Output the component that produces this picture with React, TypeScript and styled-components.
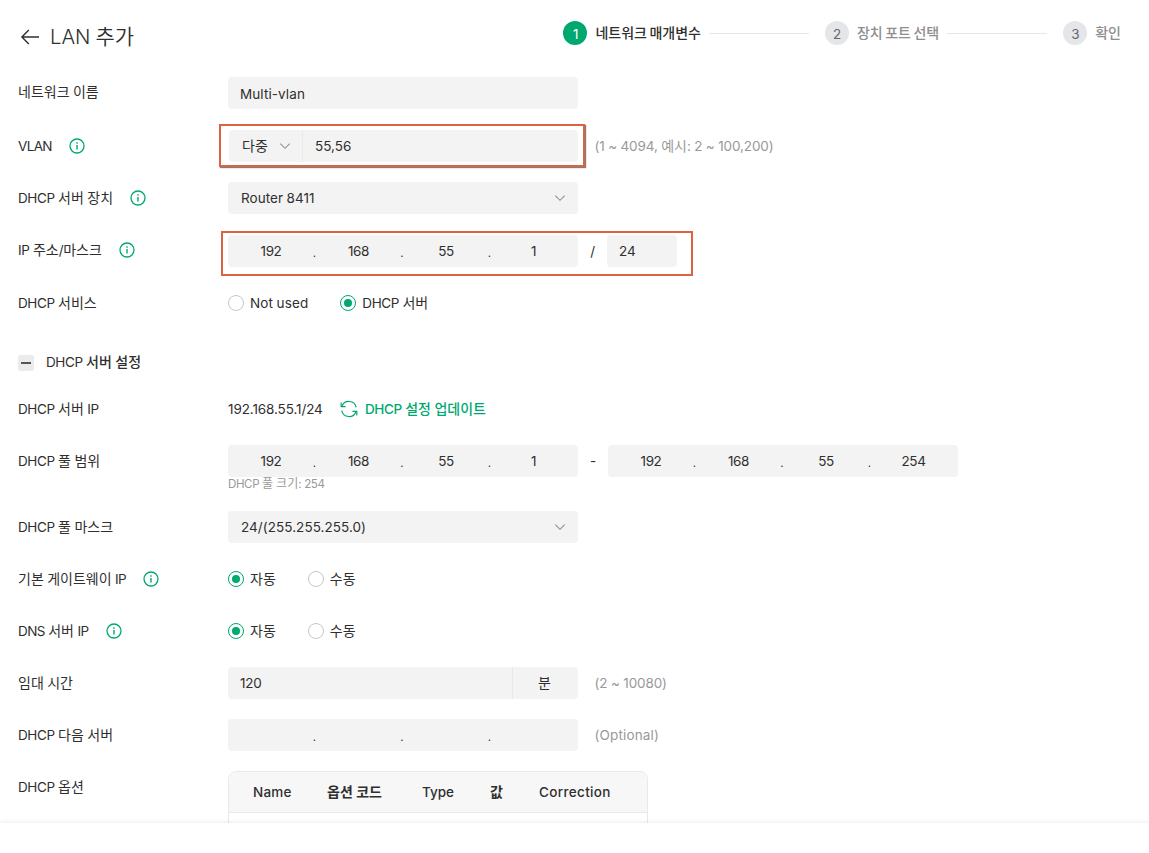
import React from 'react';
import styled, { createGlobalStyle, css } from 'styled-components';

const GREEN = '#00a870';
const INK = '#2f2f2f';
const FIELD = '#f3f3f3';
const MUTED = '#999999';

const GlobalStyle = createGlobalStyle`
  body {
    margin: 0;
    background: #fff;
    color: ${INK};
    font: 400 14px/20px Roboto, "Noto Sans CJK KR", sans-serif;
  }
  * { box-sizing: border-box; }
`;

const Page = styled.div`
  height: 853px;
  display: flex;
  flex-direction: column;
  overflow: hidden;
`;

const Content = styled.main`
  height: 823px;
  flex: none;
  overflow: hidden;
  padding: 0 18px;
`;

const Footer = styled.footer`
  position: relative;
  flex: 1;
  background: #fff;
  box-shadow: 0 -1px 4px rgba(0, 0, 0, 0.08);
`;

const Latin = styled.span<{ $spacing: number; $weight?: number }>`
  font-family: Inter, sans-serif;
  font-size: 0.964em;
  font-weight: ${(p) => p.$weight ?? 'inherit'};
  letter-spacing: ${(p) => p.$spacing}px;
`;

const TextRun = styled.span`
  white-space: nowrap;
`;

const Header = styled.header`
  height: 77px;
  display: flex;
  justify-content: space-between;
  align-items: flex-start;
`;

const Title = styled.h1`
  display: flex;
  align-items: center;
  gap: 10px;
  margin: 22px 0 0 2px;
  font-size: 21px;
  line-height: 30px;
  font-weight: 350;
`;

const Steps = styled.ol`
  display: flex;
  align-items: center;
  list-style: none;
  margin: 21px 10px 0 0;
  padding: 0;
  height: 24px;
`;

const Step = styled.li<{ $active?: boolean }>`
  display: flex;
  align-items: center;
  gap: 8px;
  color: ${(p) => (p.$active ? INK : '#8e8e8e')};
  font-weight: 500;
  word-spacing: -1px;
  white-space: nowrap;
`;

const StepNumber = styled.span<{ $active?: boolean }>`
  width: 24px;
  height: 24px;
  border-radius: 50%;
  display: grid;
  place-items: center;
  padding-top: 1px;
  font-weight: 400;
  background: ${(p) => (p.$active ? GREEN : '#e5e6ea')};
  color: ${(p) => (p.$active ? '#fff' : '#666')};
`;

const StepLine = styled.li`
  width: 100px;
  height: 1px;
  margin: 1px 16px 0 8px;
  background: #e8e8e8;
`;

const Row = styled.div<{ $gap?: number }>`
  display: flex;
  align-items: center;
  height: 32px;
  margin-bottom: ${(p) => p.$gap ?? 20}px;
`;

const Label = styled.div<{ $raised?: boolean }>`
  width: 210px;
  flex: none;
  display: flex;
  align-items: center;
  gap: 17px;
  padding-bottom: ${(p) => (p.$raised ? 2 : 0)}px;
  white-space: nowrap;
`;

const fieldBox = css`
  height: 32px;
  border-radius: 4px;
  background: ${FIELD};
`;

const Field = styled.div<{ $width?: number; $lowered?: boolean }>`
  ${fieldBox}
  width: ${(p) => p.$width ?? 350}px;
  display: flex;
  align-items: center;
  padding: ${(p) => (p.$lowered ? 2 : 0)}px 12px 0;
`;

const SelectField = styled(Field)`
  justify-content: space-between;
  padding: 0 12px 0 13px;
`;

const SplitField = styled.div<{ $inset?: boolean }>`
  ${fieldBox}
  position: relative;
  display: flex;
  width: ${(p) => (p.$inset ? 349 : 350)}px;
  margin-left: ${(p) => (p.$inset ? 1 : 0)}px;
`;

const ModePart = styled.div`
  width: 74px;
  display: flex;
  align-items: center;
  justify-content: space-between;
  padding: 0 11px 0 13px;
  border-right: 1px solid #eaeaea;
`;

const ValuePart = styled.div`
  flex: 1;
  display: flex;
  align-items: center;
  padding-left: 12px;
`;

const UnitPart = styled.div`
  width: 66px;
  display: grid;
  place-items: center;
  padding-right: 2px;
  border-left: 1px solid #e8e8e8;
`;

const IpBox = styled.div`
  ${fieldBox}
  width: 350px;
  display: grid;
  grid-template-columns: repeat(4, 87.5px);
  align-items: center;
`;

const Octet = styled.div`
  display: grid;
  grid-template-columns: 86px 1px;
  height: 20px;
  text-align: center;
`;

const Dot = styled.span`
  margin-left: -1.5px;
  padding-top: 1px;
  font-weight: 300;
`;

const Joiner = styled.span<{ $width: number }>`
  width: ${(p) => p.$width}px;
  text-align: center;
`;

const Note = styled.span`
  margin-left: 16.5px;
  color: ${MUTED};
`;

const Highlighted = styled.div`
  position: relative;
  display: flex;
  align-items: center;
`;

const VlanFrame = styled.div`
  position: absolute;
  left: -9px;
  top: -6px;
  width: 366px;
  height: 43px;
  border: 2px solid #d9643f;
  box-shadow: 1px 1px 1px rgba(0, 0, 0, 0.5);
`;

const IpFrame = styled.div`
  position: absolute;
  left: -7px;
  top: -4px;
  width: 472px;
  height: 45px;
  border: 2px solid #d9643f;
`;

const RadioItem = styled.div`
  display: flex;
  align-items: center;
  gap: 6px;
  margin-right: 32px;
`;

const RadioMark = styled.span<{ $on?: boolean }>`
  width: 16px;
  height: 16px;
  border-radius: 50%;
  border: 1px solid ${(p) => (p.$on ? GREEN : '#c6c6c6')};
  display: grid;
  place-items: center;
  &::after {
    content: '';
    width: 8px;
    height: 8px;
    border-radius: 50%;
    background: ${(p) => (p.$on ? GREEN : 'transparent')};
  }
`;

const SectionTitle = styled.div`
  display: flex;
  align-items: center;
  gap: 12px;
  font-weight: 500;
`;

const Collapse = styled.span`
  width: 16px;
  height: 16px;
  margin-top: 2px;
  border-radius: 2px;
  background: #ebebeb;
  display: grid;
  place-items: center;
  &::after {
    content: '';
    width: 10px;
    height: 2px;
    background: #555;
  }
`;

const ServerIp = styled.div`
  width: 95px;
`;

const UpdateLink = styled.a`
  display: flex;
  align-items: center;
  gap: 7px;
  margin-left: 17px;
  color: ${GREEN};
  font-weight: 500;
`;

const PoolHint = styled.div`
  margin: -20px 0 20px 210px;
  height: 14px;
  font-size: 12px;
  line-height: 14px;
  color: ${MUTED};
`;

const OptionRow = styled.div`
  display: flex;
  align-items: flex-start;
`;

const OptionTable = styled.div`
  width: 420px;
  height: 90px;
  border: 1px solid #e9e9e9;
  border-radius: 8px;
  overflow: hidden;
`;

const TableHead = styled.div`
  height: 41px;
  display: grid;
  grid-template-columns: 74px 95px 68px 49px auto;
  align-items: center;
  padding-left: 24px;
  background: #f7f7f7;
  border-bottom: 1px solid #e9e9e9;
  font-weight: 500;
`;

const HangulHead = styled.span`
  font-weight: 700;
`;

const InfoIcon = () => (
  <svg width="16" height="16" viewBox="0 0 16 16" fill="none">
    <circle cx="8" cy="8" r="7" stroke={GREEN} strokeWidth="1.3" />
    <path d="M8 7v4.6M8 4.2v1.5" stroke={GREEN} strokeWidth="1.4" />
  </svg>
);

const Chevron = () => (
  <svg width="12" height="12" viewBox="0 0 12 12" fill="none">
    <path d="M1.3 3.7L6 8.3l4.7-4.6" stroke="#929292" strokeWidth="1.15" />
  </svg>
);

const BackArrow = () => (
  <svg width="20" height="20" viewBox="0 0 20 20" fill="none">
    <path d="M19 10H2M8.8 3L1.9 10l6.9 7" stroke={INK} strokeWidth="1.4" />
  </svg>
);

const RefreshIcon = () => (
  <svg width="18" height="18" viewBox="0 0 18 18" fill="none" stroke={GREEN} strokeWidth="1.2">
    <path d="M2 6.3A7.4 7.4 0 0 1 16.2 7.4M16 11.7A7.4 7.4 0 0 1 1.8 10.6" />
    <path d="M1.2 2.4v4.2h4.4M16.8 15.6v-4.2h-4.4" />
  </svg>
);

/* Sets Latin runs in Inter and leaves Hangul and spaces in the page font. */
const T = ({ children, ls = -0.4, weight }: { children: string; ls?: number; weight?: number }) => (
  <TextRun>
    {children.split(/([\x21-\x7e]+)/).map((part, i) =>
      i % 2 ? <Latin key={i} $spacing={ls} $weight={weight}>{part}</Latin> : part,
    )}
  </TextRun>
);

const IpInput = ({ value }: { value: string[] }) => (
  <IpBox>
    {value.map((part, i) => (
      <Octet key={i}>
        <T>{part}</T>
        {i < 3 && <Dot><T>.</T></Dot>}
      </Octet>
    ))}
  </IpBox>
);

const Radio = ({ on, children }: { on?: boolean; children: React.ReactNode }) => (
  <RadioItem>
    <RadioMark $on={on} />
    {children}
  </RadioItem>
);

export default function App() {
  return (
    <Page>
      <GlobalStyle />
      <Content>
        <Header>
          <Title><BackArrow /><T ls={0} weight={300}>LAN 추가</T></Title>
          <Steps>
            <Step $active><StepNumber $active><T>1</T></StepNumber>네트워크 매개변수</Step>
            <StepLine />
            <Step><StepNumber><T>2</T></StepNumber>장치 포트 선택</Step>
            <StepLine />
            <Step><StepNumber><T>3</T></StepNumber>확인</Step>
          </Steps>
        </Header>
        <Row $gap={21}>
          <Label $raised>네트워크 이름</Label>
          <Field $lowered><T ls={0.1}>Multi-vlan</T></Field>
        </Row>
        <Row>
          <Label><T ls={-0.65}>VLAN</T><InfoIcon /></Label>
          <Highlighted>
            <SplitField $inset>
              <ModePart>다중<Chevron /></ModePart>
              <ValuePart><T ls={0}>55,56</T></ValuePart>
            </SplitField>
            <VlanFrame />
          </Highlighted>
          <Note><T ls={-0.1}>(1 ~ 4094, 예시: 2 ~ 100,200)</T></Note>
        </Row>
        <Row $gap={21}>
          <Label><T>DHCP 서버 장치</T><InfoIcon /></Label>
          <SelectField><T ls={0.05}>Router 8411</T><Chevron /></SelectField>
        </Row>
        <Row>
          <Label $raised><T>IP 주소/마스크</T><InfoIcon /></Label>
          <Highlighted>
            <IpInput value={['192', '168', '55', '1']} />
            <Joiner $width={29}><T>/</T></Joiner>
            <Field $width={70}><T ls={0}>24</T></Field>
            <IpFrame />
          </Highlighted>
        </Row>
        <Row $gap={27}>
          <Label><T>DHCP 서비스</T></Label>
          <Radio><T ls={0.14}>Not used</T></Radio>
          <Radio on><T>DHCP 서버</T></Radio>
        </Row>
        <Row $gap={15}>
          <SectionTitle><Collapse /><T weight={400}>DHCP 서버 설정</T></SectionTitle>
        </Row>
        <Row>
          <Label><T>DHCP 서버 IP</T></Label>
          <ServerIp><T ls={-0.1}>192.168.55.1/24</T></ServerIp>
          <UpdateLink><RefreshIcon /><T>DHCP 설정 업데이트</T></UpdateLink>
        </Row>
        <Row>
          <Label><T>DHCP 풀 범위</T></Label>
          <IpInput value={['192', '168', '55', '1']} />
          <Joiner $width={30}><T>-</T></Joiner>
          <IpInput value={['192', '168', '55', '254']} />
        </Row>
        <PoolHint><T>DHCP 풀 크기: 254</T></PoolHint>
        <Row>
          <Label><T>DHCP 풀 마스크</T></Label>
          <SelectField><T ls={0.06}>24/(255.255.255.0)</T><Chevron /></SelectField>
        </Row>
        <Row>
          <Label><T ls={-0.8}>기본 게이트웨이 IP</T><InfoIcon /></Label>
          <Radio on>자동</Radio>
          <Radio>수동</Radio>
        </Row>
        <Row>
          <Label><T ls={-0.6}>DNS 서버 IP</T><InfoIcon /></Label>
          <Radio on>자동</Radio>
          <Radio>수동</Radio>
        </Row>
        <Row>
          <Label>임대 시간</Label>
          <SplitField>
            <ValuePart><T ls={-0.2}>120</T></ValuePart>
            <UnitPart>분</UnitPart>
          </SplitField>
          <Note><T ls={-0.1}>(2 ~ 10080)</T></Note>
        </Row>
        <Row>
          <Label><T>DHCP 다음 서버</T></Label>
          <IpInput value={['', '', '', '']} />
          <Note><T ls={0.15}>(Optional)</T></Note>
        </Row>
        <OptionRow>
          <Row><Label><T>DHCP 옵션</T></Label></Row>
          <OptionTable>
            <TableHead>
              <T ls={0.25}>Name</T>
              <HangulHead>옵션 코드</HangulHead>
              <T ls={0}>Type</T>
              <HangulHead>값</HangulHead>
              <T ls={0.35}>Correction</T>
            </TableHead>
          </OptionTable>
        </OptionRow>
      </Content>
      <Footer />
    </Page>
  );
}
